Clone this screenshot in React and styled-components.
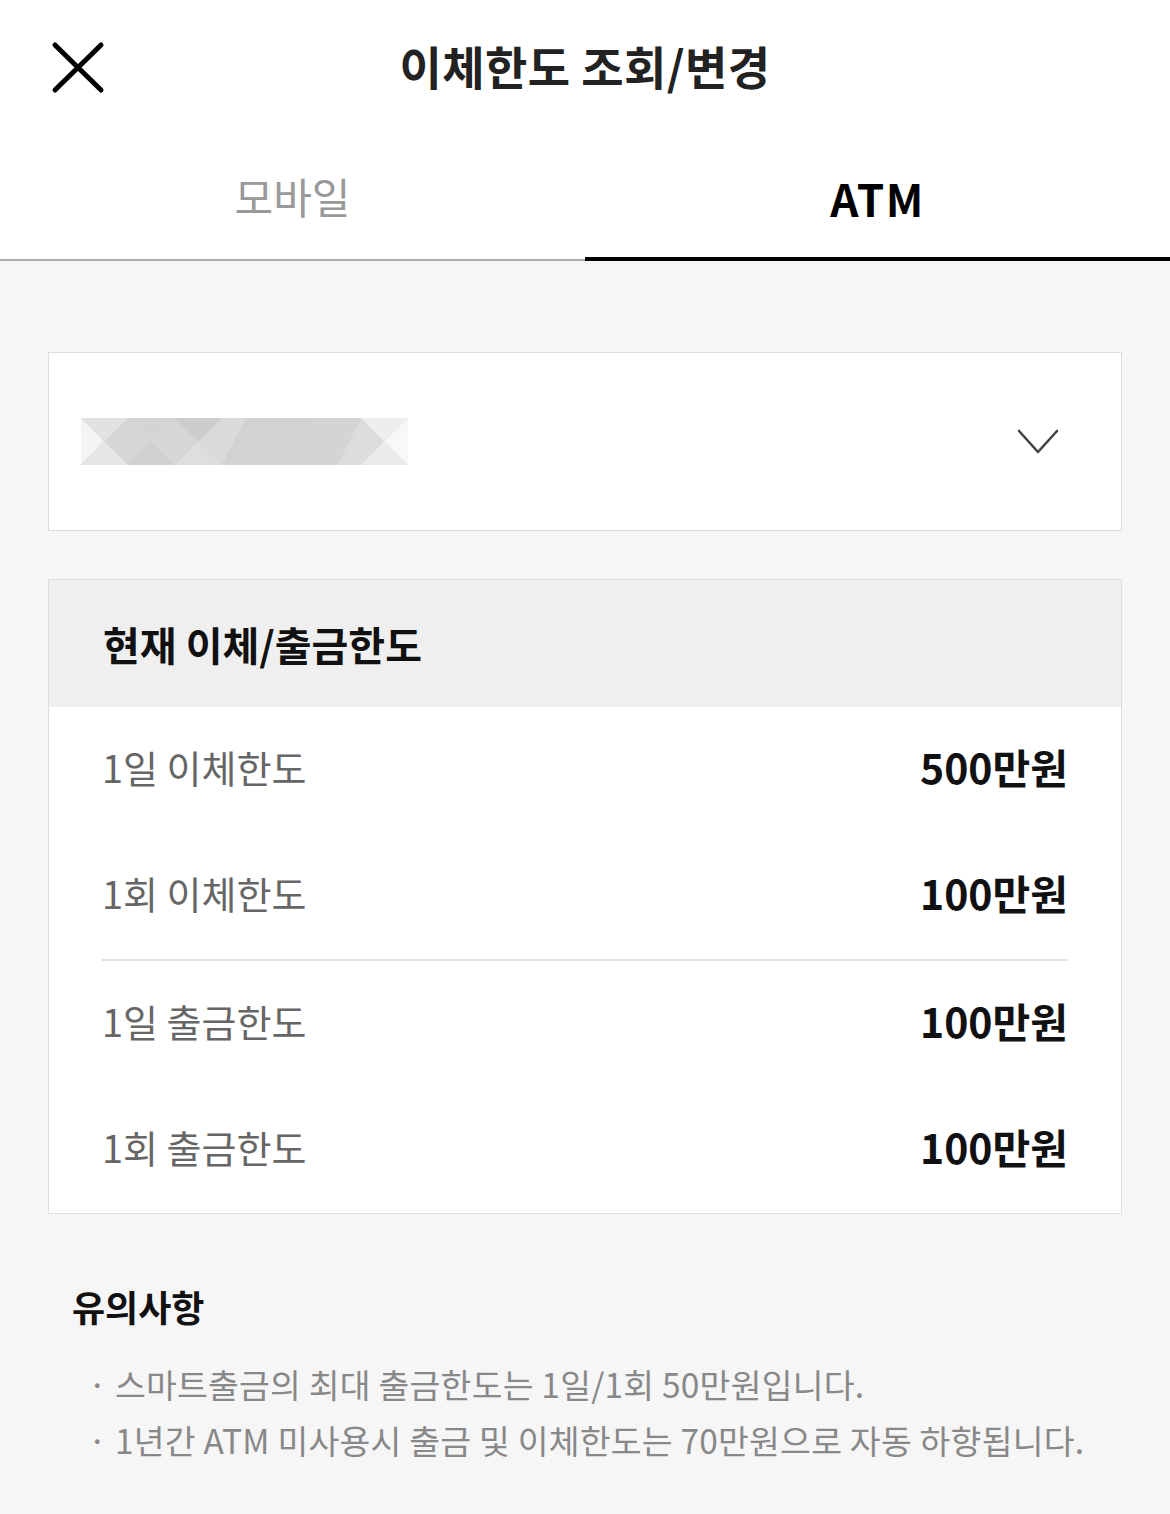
import React, { useState } from "react";
import styled, { createGlobalStyle } from "styled-components";

const GlobalStyle = createGlobalStyle`
  html, body {
    margin: 0;
    padding: 0;
    background: #f6f6f6;
  }
  body {
    font-family: "Noto Sans CJK KR", "Noto Sans", sans-serif;
    -webkit-font-smoothing: antialiased;
  }
`;

const Page = styled.div`
  width: 1170px;
  min-height: 1514px;
  background: #f6f6f6;
`;

const Header = styled.header`
  position: relative;
  height: 130px;
  display: flex;
  align-items: center;
  justify-content: center;
  background: #fff;
`;

const CloseButton = styled.button`
  position: absolute;
  left: 50px;
  top: 40px;
  width: 56px;
  height: 56px;
  padding: 0;
  border: none;
  background: transparent;
  cursor: pointer;
`;

const Title = styled.h1`
  margin: 0;
  font-size: 46px;
  font-weight: 700;
  color: #222;
  letter-spacing: 0.4px;
`;

const Tabs = styled.nav`
  display: flex;
  background: #fff;
  border-bottom: 2px solid #aaa;
`;

const Tab = styled.button`
  flex: 1;
  height: 131px;
  box-sizing: border-box;
  padding: 8px 0 ${(p) => (p.$active ? "0" : "4px")};
  border: none;
  border-bottom: 4px solid ${(p) => (p.$active ? "#000" : "transparent")};
  margin-bottom: -2px;
  background: transparent;
  font-family: inherit;
  font-size: ${(p) => (p.$active ? "44px" : "42px")};
  font-weight: ${(p) => (p.$active ? 700 : 400)};
  letter-spacing: ${(p) => (p.$active ? "1.5px" : "0")};
  color: ${(p) => (p.$active ? "#000" : "#999")};
  cursor: pointer;
`;

const Content = styled.main`
  padding: 91px 48px 40px;
  display: flex;
  flex-direction: column;
`;

const Select = styled.div`
  height: 177px;
  background: #fff;
  border: 1px solid #ddd;
  display: flex;
  align-items: center;
  justify-content: space-between;
  padding: 0 62px 0 32px;
`;

const Card = styled.section`
  margin-top: 48px;
  background: #fff;
  border: 1px solid #ddd;
`;

const CardHead = styled.div`
  height: 127px;
  background: #efefef;
  display: flex;
  align-items: center;
  padding: 0 54px;
  font-size: 40px;
  font-weight: 700;
  color: #111;
`;

const Group = styled.div`
  margin: 0 53px;
  & + & {
    border-top: 2px solid #e2e2e2;
  }
`;

const Row = styled.div`
  height: 126px;
  box-sizing: border-box;
  padding-bottom: 8px;
  display: flex;
  align-items: center;
  justify-content: space-between;
`;

const Label = styled.span`
  font-size: 38px;
  color: #666;
`;

const Amount = styled.span`
  font-size: 41px;
  font-weight: 700;
  color: #111;
`;

const Notes = styled.section`
  padding: 66px 24px 0;
`;

const NotesTitle = styled.h2`
  margin: 0 0 24px;
  font-size: 36px;
  font-weight: 700;
  color: #111;
`;

const NoteList = styled.ul`
  margin: 0;
  padding: 0 0 0 16px;
  list-style: none;
`;

const NoteItem = styled.li`
  font-size: 33.5px;
  line-height: 56px;
  color: #888;
  letter-spacing: 0.2px;

  &::before {
    content: "·";
    margin-right: 8px;
  }
`;

const CloseIcon = () => (
  <svg width="56" height="56" viewBox="0 0 56 56">
    <path
      d="M5 5 L51 50 M51 5 L5 50"
      stroke="#000"
      strokeWidth="5"
      strokeLinecap="round"
    />
  </svg>
);

const Chevron = () => (
  <svg width="42" height="26" viewBox="0 0 42 26">
    <path
      d="M2 2 L21 23 L40 2"
      fill="none"
      stroke="#444"
      strokeWidth="2.6"
      strokeLinecap="round"
      strokeLinejoin="round"
    />
  </svg>
);

const MaskedAccount = () => (
  <svg width="327" height="47" viewBox="0 0 327 47">
    <rect width="327" height="47" fill="#d6d6d6" />
    <polygon points="0,0 23,23.5 0,47" fill="#f4f4f4" />
    <polygon points="0,0 47,0 23,23.5" fill="#e2e2e2" />
    <polygon points="0,47 47,47 23,23.5" fill="#e6e6e6" />
    <polygon points="47,0 94,0 70,23.5" fill="#d4d4d4" />
    <polygon points="47,47 94,47 70,23.5" fill="#d0d0d0" />
    <polygon points="94,0 141,0 117,23.5" fill="#cdcdcd" />
    <polygon points="94,47 141,47 117,23.5" fill="#dedede" />
    <polygon points="117,23.5 141,0 165,0 141,47" fill="#dadada" />
    <polygon points="141,47 165,0 235,0 212,47" fill="#d2d2d2" />
    <polygon points="212,47 235,0 280,0 257,47" fill="#d4d4d4" />
    <polygon points="257,47 280,0 303,23.5 280,47" fill="#dcdcdc" />
    <polygon points="280,0 327,0 303,23.5" fill="#eeeeee" />
    <polygon points="280,47 327,47 303,23.5" fill="#ebebeb" />
    <polygon points="327,0 303,23.5 327,47" fill="#f8f8f8" />
  </svg>
);

const groups = [
  [
    { label: "1일 이체한도", amount: "500만원" },
    { label: "1회 이체한도", amount: "100만원" },
  ],
  [
    { label: "1일 출금한도", amount: "100만원" },
    { label: "1회 출금한도", amount: "100만원" },
  ],
];

const notes = [
  "스마트출금의 최대 출금한도는 1일/1회 50만원입니다.",
  "1년간 ATM 미사용시 출금 및 이체한도는 70만원으로 자동 하향됩니다.",
];

export default function App() {
  const [tab, setTab] = useState("atm");

  return (
    <Page>
      <GlobalStyle />
      <Header>
        <CloseButton aria-label="닫기">
          <CloseIcon />
        </CloseButton>
        <Title>이체한도 조회/변경</Title>
      </Header>
      <Tabs>
        <Tab $active={tab === "mobile"} onClick={() => setTab("mobile")}>
          모바일
        </Tab>
        <Tab $active={tab === "atm"} onClick={() => setTab("atm")}>
          ATM
        </Tab>
      </Tabs>
      <Content>
        <Select>
          <MaskedAccount />
          <Chevron />
        </Select>
        <Card>
          <CardHead>현재 이체/출금한도</CardHead>
          {groups.map((rows, i) => (
            <Group key={i}>
              {rows.map((r) => (
                <Row key={r.label}>
                  <Label>{r.label}</Label>
                  <Amount>{r.amount}</Amount>
                </Row>
              ))}
            </Group>
          ))}
        </Card>
        <Notes>
          <NotesTitle>유의사항</NotesTitle>
          <NoteList>
            {notes.map((n) => (
              <NoteItem key={n}>{n}</NoteItem>
            ))}
          </NoteList>
        </Notes>
      </Content>
    </Page>
  );
}
